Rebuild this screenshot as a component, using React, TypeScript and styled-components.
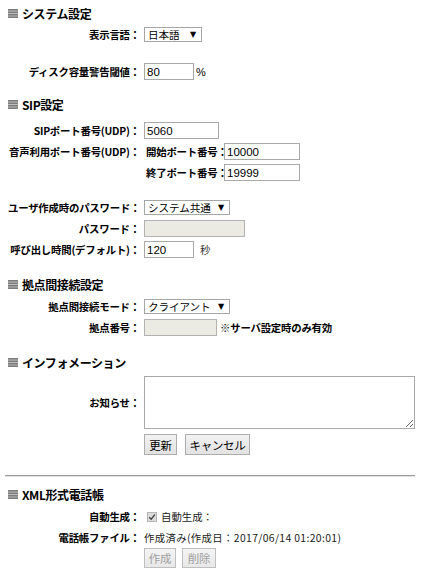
import React from "react";
import styled, { createGlobalStyle } from "styled-components";

const Global = createGlobalStyle`
  html, body { margin: 0; padding: 0; background: #fff; }
  body {
    font-family: "Noto Sans CJK JP", "Noto Sans", sans-serif;
    color: #000;
  }
`;

const Page = styled.div`
  width: 422px;
  padding: 4px 7px 8px 8px;
  box-sizing: border-box;
`;

const Heading = styled.div<{ $top?: number }>`
  display: flex;
  align-items: center;
  gap: 4px;
  height: 18px;
  margin-top: ${(p) => p.$top ?? 0}px;
  font-size: 12px;
  font-weight: bold;
  letter-spacing: -0.4px;
  white-space: nowrap;
`;

const Rows = styled.div<{ $top?: number }>`
  display: flex;
  flex-direction: column;
  margin-top: ${(p) => p.$top ?? 0}px;
`;

const Row = styled.div<{ $align?: string }>`
  display: flex;
  align-items: ${(p) => p.$align ?? "center"};
  min-height: 21px;
`;

const Spacer = styled.div<{ $h: number }>`
  height: ${(p) => p.$h}px;
`;

const Label = styled.div<{ $lh?: number }>`
  flex: none;
  width: 132px;
  text-align: right;
  font-size: 10.4px;
  font-weight: bold;
  letter-spacing: -0.2px;
  white-space: nowrap;
  margin-right: 4px;
  line-height: ${(p) => (p.$lh ? `${p.$lh}px` : "normal")};
`;

const Content = styled.div`
  display: flex;
  align-items: center;
  gap: 2px;
`;

const Stack = styled.div`
  display: flex;
  flex-direction: column;
`;

const SubRow = styled.div`
  display: flex;
  align-items: center;
  min-height: 21px;
`;

const SubLabel = styled.span`
  width: 78px;
  padding-left: 2px;
  font-size: 10.4px;
  font-weight: bold;
  letter-spacing: -0.2px;
  white-space: nowrap;
`;

const TextInput = styled.input<{ $w: number }>`
  box-sizing: border-box;
  width: ${(p) => p.$w}px;
  height: 17px;
  margin: 0;
  padding: 0 2px;
  border: 1px solid #a9a9a9;
  font-family: "Liberation Sans", Arial, sans-serif;
  font-size: 11.5px;
  color: #000;
  background: #fff;
  outline: none;
  &:disabled {
    background: #ebebe4;
    border-color: #b2b2b2;
  }
`;

const SelectBox = styled.div<{ $w: number }>`
  box-sizing: border-box;
  width: ${(p) => p.$w}px;
  height: 15px;
  border: 1px solid #a6a6a6;
  background: #fff;
  display: flex;
  align-items: center;
  justify-content: space-between;
  padding: 0 5px 0 3px;
  font-size: 10.6px;
  letter-spacing: -0.1px;
  line-height: 13px;
  white-space: nowrap;
`;

const Arrow = styled.span`
  font-size: 8px;
  font-family: "DejaVu Sans", sans-serif;
`;

const Unit = styled.span<{ $ml?: number; $bold?: boolean }>`
  margin-left: ${(p) => p.$ml ?? 0}px;
  font-size: 10.4px;
  font-weight: ${(p) => (p.$bold ? "bold" : "normal")};
  color: ${(p) => (p.$bold ? "#000" : "#333")};
  letter-spacing: -0.2px;
  white-space: nowrap;
`;

const UnitPlain = styled.span`
  font-family: "Liberation Sans", Arial, sans-serif;
  font-size: 11px;
`;

const TextArea = styled.textarea`
  box-sizing: border-box;
  display: block;
  width: 271px;
  height: 53px;
  margin: 0;
  border: 1px solid #a9a9a9;
  font-family: "Liberation Sans", Arial, sans-serif;
  font-size: 12px;
  outline: none;
`;

const ButtonBar = styled.div<{ $gap: number; $top?: number }>`
  display: flex;
  gap: ${(p) => p.$gap}px;
  margin-left: 136px;
  margin-top: ${(p) => p.$top ?? 0}px;
`;

const Button = styled.button<{ $w: number; $h?: number }>`
  box-sizing: border-box;
  width: ${(p) => p.$w}px;
  height: ${(p) => p.$h ?? 21}px;
  margin: 0;
  padding: 0;
  border: 1px solid #adadad;
  border-radius: 0;
  background: linear-gradient(#f2f2f2, #e2e2e2);
  font-family: "Noto Sans CJK JP", sans-serif;
  font-size: 11.5px;
  color: #000;
  letter-spacing: -0.3px;
  &:disabled {
    color: #a0a0a0;
    border-color: #bfbfbf;
    background: linear-gradient(#f4f4f4, #e8e8e8);
  }
`;

const Rule = styled.hr`
  margin: 20px 0 0 -3px;
  width: 410px;
  height: 0;
  border: none;
  border-top: 1px solid #9c9c9c;
  border-bottom: 1px solid #e2e2e2;
`;

const CheckBox = styled.span`
  box-sizing: border-box;
  width: 10px;
  height: 10px;
  margin: 0 2px 0 3px;
  border: 1px solid #b5b5b5;
  background: #dcdcdc;
  display: inline-flex;
  align-items: center;
  justify-content: center;
`;

const Plain = styled.span<{ $spacing?: number }>`
  font-size: 10.4px;
  color: #222;
  white-space: nowrap;
  letter-spacing: ${(p) => p.$spacing ?? 0}px;
`;

const Icon = () => (
  <svg width="10" height="9" viewBox="0 0 10 9">
    <rect x="0" y="0" width="10" height="9" fill="#c4c4c4" />
    <rect x="0" y="0" width="10" height="1.6" fill="#7c7c7c" />
    <rect x="0" y="2.5" width="10" height="1.6" fill="#7c7c7c" />
    <rect x="0" y="5" width="10" height="1.6" fill="#7c7c7c" />
    <rect x="0" y="7.4" width="10" height="1.6" fill="#7c7c7c" />
  </svg>
);

const Check = () => (
  <svg width="8" height="8" viewBox="0 0 8 8">
    <path d="M1.2 4.2 L3.2 6.2 L6.8 1.6" stroke="#444" strokeWidth="1.4" fill="none" />
  </svg>
);

export default function App() {
  return (
    <Page>
      <Global />
      <Heading>
        <Icon />
        システム設定
      </Heading>
      <Rows $top={2}>
        <Row>
          <Label>表示言語：</Label>
          <Content>
            <SelectBox $w={58}>
              日本語 <Arrow>▼</Arrow>
            </SelectBox>
          </Content>
        </Row>
        <Spacer $h={16} />
        <Row>
          <Label>ディスク容量警告閾値：</Label>
          <Content>
            <TextInput $w={50} defaultValue="80" />
            <UnitPlain>%</UnitPlain>
          </Content>
        </Row>
      </Rows>

      <Heading $top={13}>
        <Icon />
        SIP設定
      </Heading>
      <Rows $top={7}>
        <Row>
          <Label>SIPポート番号(UDP)：</Label>
          <Content>
            <TextInput $w={75} defaultValue="5060" />
          </Content>
        </Row>
        <Row $align="flex-start">
          <Label $lh={21}>音声利用ポート番号(UDP)：</Label>
          <Stack>
            <SubRow>
              <SubLabel>開始ポート番号：</SubLabel>
              <TextInput $w={76} defaultValue="10000" />
            </SubRow>
            <SubRow>
              <SubLabel>終了ポート番号：</SubLabel>
              <TextInput $w={76} defaultValue="19999" />
            </SubRow>
          </Stack>
        </Row>
        <Spacer $h={14} />
        <Row>
          <Label>ユーザ作成時のパスワード：</Label>
          <Content>
            <SelectBox $w={86}>
              システム共通 <Arrow>▼</Arrow>
            </SelectBox>
          </Content>
        </Row>
        <Row>
          <Label>パスワード：</Label>
          <Content>
            <TextInput $w={101} disabled />
          </Content>
        </Row>
        <Row>
          <Label>呼び出し時間(デフォルト)：</Label>
          <Content>
            <TextInput $w={50} defaultValue="120" />
            <Unit $ml={4}>秒</Unit>
          </Content>
        </Row>
      </Rows>

      <Heading $top={15}>
        <Icon />
        拠点間接続設定
      </Heading>
      <Rows $top={3}>
        <Row>
          <Label>拠点間接続モード：</Label>
          <Content>
            <SelectBox $w={86}>
              クライアント <Arrow>▼</Arrow>
            </SelectBox>
          </Content>
        </Row>
        <Row>
          <Label>拠点番号：</Label>
          <Content>
            <TextInput $w={73} disabled />
            <Unit $ml={1} $bold>
              ※サーバ設定時のみ有効
            </Unit>
          </Content>
        </Row>
      </Rows>

      <Heading $top={15}>
        <Icon />
        インフォメーション
      </Heading>
      <Rows $top={5}>
        <Row>
          <Label>お知らせ：</Label>
          <TextArea />
        </Row>
      </Rows>
      <ButtonBar $gap={8} $top={5}>
        <Button $w={33}>更新</Button>
        <Button $w={65}>キャンセル</Button>
      </ButtonBar>

      <Rule />

      <Heading $top={8}>
        <Icon />
        XML形式電話帳
      </Heading>
      <Rows $top={3}>
        <Row>
          <Label>自動生成：</Label>
          <Content>
            <CheckBox>
              <Check />
            </CheckBox>
            <Plain>自動生成：</Plain>
          </Content>
        </Row>
        <Row>
          <Label>電話帳ファイル：</Label>
          <Content>
            <Plain $spacing={0.35}>作成済み(作成日：2017/06/14 01:20:01)</Plain>
          </Content>
        </Row>
      </Rows>
      <ButtonBar $gap={6}>
        <Button $w={32} $h={20} disabled>
          作成
        </Button>
        <Button $w={34} $h={20} disabled>
          削除
        </Button>
      </ButtonBar>
    </Page>
  );
}
